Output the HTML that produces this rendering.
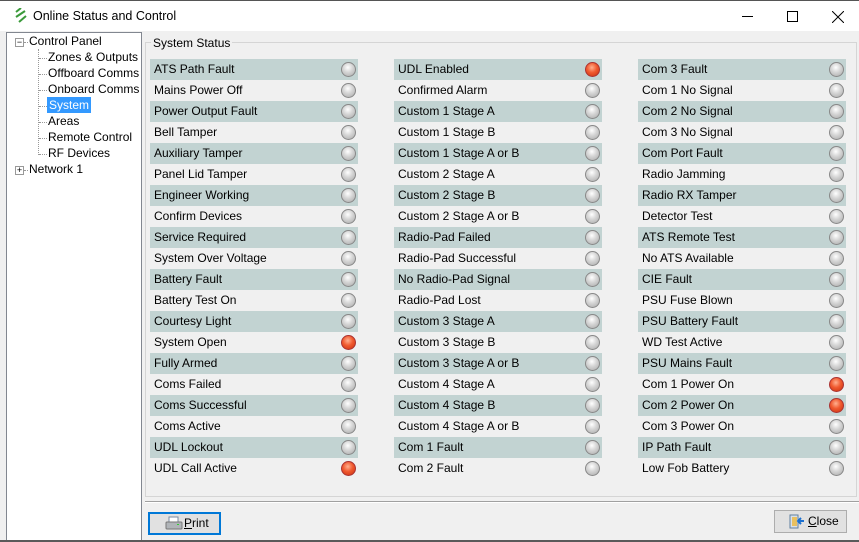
<!DOCTYPE html>
<html><head><style>
*{margin:0;padding:0;box-sizing:border-box}
body{width:859px;height:542px;background:#f0f0f0;font-family:"Liberation Sans",sans-serif;font-size:12px;color:#000;position:relative;overflow:hidden}
.title{position:absolute;left:0;top:0;width:859px;height:31px;background:#fff;border-top:1px solid #555}
.title span{position:absolute;left:33px;top:8px;font-size:12.5px}
.tree{position:absolute;left:6px;top:32px;width:136px;height:509px;background:#fff;border:1px solid #828790}
.tree div{position:absolute;font-size:12px;white-space:nowrap}
.tree .h{height:1px;width:8px;border-top:1px dotted #999}
.grp{position:absolute;left:145px;top:42px;width:712px;height:455px;border:1px solid #d5d5d5}
.grp .lg{position:absolute;left:5px;top:-7px;background:#f0f0f0;padding:0 2px}
.col{position:absolute;top:59px;width:208px}
.r{height:21px;position:relative;padding-left:4px;line-height:21px}
.r:nth-child(odd){background:#c2d3d2}
.r i{position:absolute;right:2px;top:3px;width:15px;height:15px;border-radius:50%;border:1px solid #888;background:radial-gradient(circle at 45% 35%,#fff 0,#d8d8d8 40%,#a8a8a8 100%)}
.r i.on{border-color:#a33;background:radial-gradient(circle at 45% 35%,#ffb090 0,#f05a30 45%,#c8300e 100%)}
.btn{position:absolute;height:23px;background:#e1e1e1;border:1px solid #adadad;font-size:12px;line-height:21px}
</style></head><body>
<div class="title">
<svg style="position:absolute;left:14px;top:7px" width="14" height="16"><g stroke="#3a9a3a" stroke-width="2"><line x1="2" y1="4" x2="7" y2="0"/><line x1="2" y1="9" x2="11" y2="3"/><line x1="5" y1="14" x2="12" y2="8"/></g></svg>
<span>Online Status and Control</span>
<div style="position:absolute;left:742px;top:15px;width:11px;height:1px;background:#000"></div>
<div style="position:absolute;left:787px;top:10px;width:11px;height:11px;border:1px solid #000"></div>
<svg style="position:absolute;left:832px;top:10px" width="12" height="12"><path d="M0 0L12 12M12 0L0 12" stroke="#000"/></svg>
</div>
<div class="tree">
<div style="left:8px;top:5px;width:9px;height:9px;border:1px solid #999;font-size:9px;line-height:7px;text-align:center">−</div>
<div class="h" style="left:17px;top:9px;width:4px"></div>
<div style="left:22px;top:1px">Control Panel</div>
<div style="left:31px;top:16px;width:1px;height:106px;border-left:1px dotted #999"></div>
<div class="h" style="left:32px;top:25px"></div>
<div class="h" style="left:32px;top:41px"></div>
<div class="h" style="left:32px;top:57px"></div>
<div class="h" style="left:32px;top:73px"></div>
<div class="h" style="left:32px;top:89px"></div>
<div class="h" style="left:32px;top:105px"></div>
<div class="h" style="left:32px;top:121px"></div>
<div style="left:41px;top:17px">Zones &amp; Outputs</div>
<div style="left:41px;top:33px">Offboard Comms</div>
<div style="left:41px;top:49px">Onboard Comms</div>
<div style="left:40px;top:64px;background:#3399ff;color:#fff;padding:1px 2px">System</div>
<div style="left:41px;top:81px">Areas</div>
<div style="left:41px;top:97px">Remote Control</div>
<div style="left:41px;top:113px">RF Devices</div>
<div style="left:8px;top:133px;width:9px;height:9px;border:1px solid #999;font-size:9px;line-height:7px;text-align:center">+</div>
<div class="h" style="left:17px;top:137px;width:4px"></div>
<div style="left:22px;top:129px">Network 1</div>
</div>
<div class="grp"><span class="lg">System Status</span></div>
<div class="col" style="left:150px">
<div class="r">ATS Path Fault<i></i></div><div class="r">Mains Power Off<i></i></div><div class="r">Power Output Fault<i></i></div><div class="r">Bell Tamper<i></i></div><div class="r">Auxiliary Tamper<i></i></div><div class="r">Panel Lid Tamper<i></i></div><div class="r">Engineer Working<i></i></div><div class="r">Confirm Devices<i></i></div><div class="r">Service Required<i></i></div><div class="r">System Over Voltage<i></i></div><div class="r">Battery Fault<i></i></div><div class="r">Battery Test On<i></i></div><div class="r">Courtesy Light<i></i></div><div class="r">System Open<i class="on"></i></div><div class="r">Fully Armed<i></i></div><div class="r">Coms Failed<i></i></div><div class="r">Coms Successful<i></i></div><div class="r">Coms Active<i></i></div><div class="r">UDL Lockout<i></i></div><div class="r">UDL Call Active<i class="on"></i></div>
</div>
<div class="col" style="left:394px">
<div class="r">UDL Enabled<i class="on"></i></div><div class="r">Confirmed Alarm<i></i></div><div class="r">Custom 1 Stage A<i></i></div><div class="r">Custom 1 Stage B<i></i></div><div class="r">Custom 1 Stage A or B<i></i></div><div class="r">Custom 2 Stage A<i></i></div><div class="r">Custom 2 Stage B<i></i></div><div class="r">Custom 2 Stage A or B<i></i></div><div class="r">Radio-Pad Failed<i></i></div><div class="r">Radio-Pad Successful<i></i></div><div class="r">No Radio-Pad Signal<i></i></div><div class="r">Radio-Pad Lost<i></i></div><div class="r">Custom 3 Stage A<i></i></div><div class="r">Custom 3 Stage B<i></i></div><div class="r">Custom 3 Stage A or B<i></i></div><div class="r">Custom 4 Stage A<i></i></div><div class="r">Custom 4 Stage B<i></i></div><div class="r">Custom 4 Stage A or B<i></i></div><div class="r">Com 1 Fault<i></i></div><div class="r">Com 2 Fault<i></i></div>
</div>
<div class="col" style="left:638px">
<div class="r">Com 3 Fault<i></i></div><div class="r">Com 1 No Signal<i></i></div><div class="r">Com 2 No Signal<i></i></div><div class="r">Com 3 No Signal<i></i></div><div class="r">Com Port Fault<i></i></div><div class="r">Radio Jamming<i></i></div><div class="r">Radio RX Tamper<i></i></div><div class="r">Detector Test<i></i></div><div class="r">ATS Remote Test<i></i></div><div class="r">No ATS Available<i></i></div><div class="r">CIE Fault<i></i></div><div class="r">PSU Fuse Blown<i></i></div><div class="r">PSU Battery Fault<i></i></div><div class="r">WD Test Active<i></i></div><div class="r">PSU Mains Fault<i></i></div><div class="r">Com 1 Power On<i class="on"></i></div><div class="r">Com 2 Power On<i class="on"></i></div><div class="r">Com 3 Power On<i></i></div><div class="r">IP Path Fault<i></i></div><div class="r">Low Fob Battery<i></i></div>
</div>
<div style="position:absolute;left:145px;top:501px;width:714px;height:2px;border-top:1px solid #a0a0a0;border-bottom:1px solid #fff"></div>
<div class="btn" style="left:148px;top:512px;width:73px;border:2px solid #0078d7;line-height:19px">
<svg style="position:absolute;left:15px;top:2px" width="18" height="16"><rect x="4" y="1" width="9" height="6" fill="#fff" stroke="#7a8aa0"/><rect x="1" y="6" width="16" height="7" rx="1" fill="#b0b4b8" stroke="#777"/><rect x="12" y="8" width="2" height="1" fill="#3c3"/></svg>
<span style="position:absolute;left:34px"><u>P</u>rint</span></div>
<div class="btn" style="left:774px;top:510px;width:73px">
<svg style="position:absolute;left:14px;top:3px" width="16" height="16"><rect x="1" y="1" width="8" height="13" fill="#d8e0ea" stroke="#6080a0"/><rect x="3" y="3" width="5" height="9" fill="#e8c060"/><path d="M15 7H10M12 4L9 7L12 10" stroke="#1a6fd0" stroke-width="2" fill="none"/></svg>
<span style="position:absolute;left:33px"><u>C</u>lose</span></div>
<div style="position:absolute;left:0;top:540px;width:859px;height:2px;background:#5a5a5a"></div>
</body></html>
